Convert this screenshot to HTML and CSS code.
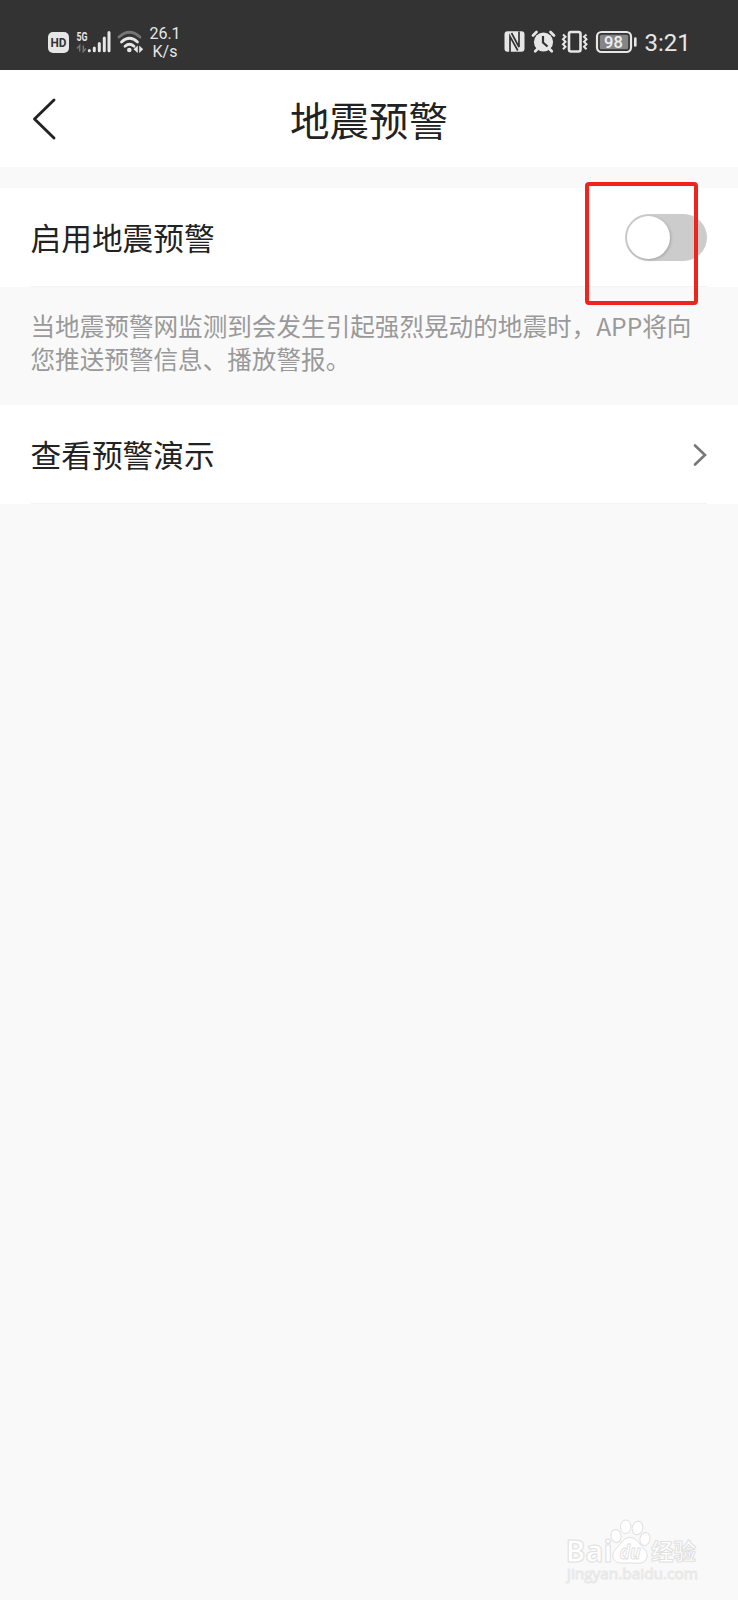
FILE: index.html
```html
<!DOCTYPE html>
<html lang="zh-CN">
<head>
<meta charset="utf-8">
<title>地震预警</title>
<link rel="stylesheet" href="styles.css">
</head>
<body>
<div class="screen">
  <div class="status">
    <svg class="status-left" viewBox="40 15 106 55" width="106" height="55">
      <rect x="48" y="32" width="21" height="21" rx="5" fill="#e6e6e6"/>
      <text class="hd" x="58.5" y="47.3" text-anchor="middle" textLength="16" lengthAdjust="spacingAndGlyphs">HD</text>
      <text class="gen" x="76.5" y="41" textLength="11" lengthAdjust="spacingAndGlyphs">5G</text>
      <g fill="none" stroke="#777" stroke-width="1.5"><path d="M79.7 51.500V45.500L77 48.500M83.300 45.500V51.500L86 48.500"/></g>
      <g stroke="#e6e6e6" stroke-width="3" stroke-linecap="round"><path d="M89.300 50.500v.2M94.300 48v2.800M99.300 43.500v7.300M104.300 38v12.800M109 32.500v18.300"/></g>
      <g fill="none" stroke-linecap="round" stroke-width="2.800">
        <path d="M119 37Q129.500 27.500 140 37" stroke="#757575"/>
        <path d="M121.500 42Q129.500 34.500 137.500 42M125 46.300Q129.500 42.300 134 46.300" stroke="#e6e6e6"/>
      </g>
      <circle cx="129.300" cy="50" r="2.300" fill="#e6e6e6"/>
      <path d="M137.800 45.500v7.500l-4.300-3.700zM139.200 45.500v7.500l4-3.700z" fill="#e6e6e6"/>
    </svg>
    <div class="speed"><span>26.1</span><span>K/s</span></div>
    <svg class="status-right" viewBox="490 15 150 55" width="150" height="55">
      <path d="M507.500 31.300h14q3 0 3 3v14.500q0 3-3 3h-14q-3 0-3-3V34.300q0-3 3-3z" fill="#e6e6e6"/>
      <path d="M510 52V36.500L517.800 50.500M519 31.500V47L511.500 33" fill="none" stroke="#333" stroke-width="1.700"/>
      <circle cx="543.500" cy="42" r="9.600" fill="#e6e6e6"/>
      <path d="M533 35.500l3.500-3.500M554 35.500l-3.500-3.500M537.500 49l-2.300 2.300M549.500 49l2.300 2.300" stroke="#e6e6e6" stroke-width="2.700" stroke-linecap="round"/>
      <path d="M543 36v6.500l4.500 4" fill="none" stroke="#333" stroke-width="2.200"/>
      <rect x="569" y="32" width="11.500" height="19.500" rx="2" fill="none" stroke="#e6e6e6" stroke-width="2.600"/>
      <path d="M563 34.500l2.500 2.300-2.500 2.500 2.500 2.500-2.500 2.500 2.500 2.500-2.500 2.500M586.500 34.500l-2.500 2.300 2.500 2.500-2.500 2.500 2.500 2.500-2.500 2.500 2.500 2.500" fill="none" stroke="#e6e6e6" stroke-width="2"/>
      <rect x="597" y="32" width="34" height="20" rx="4.500" fill="none" stroke="#e6e6e6" stroke-width="2.200"/>
      <rect x="599.800" y="34.800" width="28.400" height="14.400" rx="1.500" fill="#858585"/>
      <path d="M635.300 38.500v7" stroke="#e6e6e6" stroke-width="2.600" stroke-linecap="round"/>
      <text class="level" x="613.500" y="48" text-anchor="middle">98</text>
    </svg>
    <span class="clock">3:21</span>
  </div>

  <header class="header">
    <svg class="back" viewBox="0 0 26 44" width="26" height="44"><path d="M23 3L3.500 22L23 41" fill="none" stroke="#222" stroke-width="2.900" stroke-linecap="round" stroke-linejoin="round"/></svg>
    <h1 class="title">地震预警</h1>
  </header>

  <main>
    <section class="row">
      <span class="label">启用地震预警</span>
      <div class="switch"><div class="knob"></div></div>
      <div class="highlight"></div>
    </section>
    <p class="note">当地震预警网监测到会发生引起强烈晃动的地震时，APP将向<br>您推送预警信息、播放警报。</p>
    <section class="row row-link">
      <span class="label">查看预警演示</span>
      <svg class="chevron" viewBox="0 0 14 24" width="14" height="24"><path d="M2 2.500L12 12L2 21.500" fill="none" stroke="#777" stroke-width="2.600" stroke-linecap="round"/></svg>
    </section>
  </main>

  <svg class="watermark" viewBox="550 1500 188 100" width="188" height="100">
    <g fill="#fff" stroke="#e0e0e0" stroke-width="1">
      <text class="wm-brand" x="565.500" y="1561.500" textLength="47" lengthAdjust="spacingAndGlyphs">Bai</text>
      <ellipse cx="616" cy="1536" rx="5" ry="6.500" transform="rotate(-15 616 1536)"/>
      <ellipse cx="625.700" cy="1526.800" rx="5.200" ry="6.800"/>
      <ellipse cx="637.500" cy="1528" rx="5.200" ry="6.800" transform="rotate(12 637.500 1528)"/>
      <ellipse cx="645" cy="1539" rx="5" ry="6.500" transform="rotate(15 645 1539)"/>
      <path d="M630 1537.500c6 0 8 5 12 9s7 8 4 13-8 3.500-16 3.500-13 1-16-3.500 0-9 4-13 6-9 12-9z"/>
      <text class="wm-du" x="619.500" y="1559" textLength="21" lengthAdjust="spacingAndGlyphs">du</text>
      <text class="wm-cn" x="651" y="1560" textLength="45" lengthAdjust="spacingAndGlyphs">经验</text>
      <text class="wm-url" x="567" y="1579" textLength="131" lengthAdjust="spacingAndGlyphs">jingyan.baidu.com</text>
    </g>
  </svg>
</div>
</body>
</html>
```
FILE: styles.css
```css
* { box-sizing: border-box; }
body {
  margin: 0;
  background: #f9f9f9;
  font-family: "Noto Sans CJK SC", sans-serif;
  color: #222;
}
.screen {
  width: 738px;
  height: 1600px;
  display: flex;
  flex-direction: column;
  overflow: hidden;
}
.status {
  height: 70px;
  flex: none;
  background: #333;
  color: #e6e6e6;
  display: flex;
  align-items: flex-start;
  padding: 15px 0 0 40px;
  font-family: Roboto, sans-serif;
}
.status-left { flex: none; }
.speed {
  display: flex;
  flex-direction: column;
  align-items: center;
  width: 38px;
  padding-top: 9.500px;
  font-size: 16px;
  line-height: 18px;
}
.status-right { margin-left: 306px; flex: none; }
.clock { font-size: 24px; line-height: 28px; padding: 14px 0 0 4.500px; }
.hd { font: bold 13px Roboto, sans-serif; fill: #333; }
.gen { font: bold 13px Roboto, sans-serif; fill: #e6e6e6; }
.level { font: 500 16.500px Roboto, sans-serif; fill: #f0f0f0; }
.header {
  height: 97px;
  flex: none;
  background: #fff;
  display: grid;
  grid-template-columns: 60px 1fr 60px;
  align-items: center;
  padding: 0;
}
.back { margin-left: 30.500px; }
.title {
  margin: 0;
  padding-top: 1px;
  text-align: center;
  font-size: 39.500px;
  line-height: 56px;
  font-weight: 400;
}
main { padding-top: 21px; }
.row {
  position: relative;
  height: 99px;
  background: #fff;
  display: flex;
  align-items: center;
  justify-content: space-between;
  padding: 0 31px 0 30.500px;
}
.row::after {
  content: "";
  position: absolute;
  left: 31px;
  right: 31px;
  bottom: 0;
  height: 1px;
  background: #f3f3f3;
}
.label { font-size: 30.700px; line-height: 44px; padding-bottom: 1px; }
.switch {
  width: 82px;
  height: 47px;
  border-radius: 24px;
  background: #ccc;
  padding: 2px;
}
.knob {
  width: 43px;
  height: 43px;
  border-radius: 50%;
  background: #fff;
  box-shadow: 1px 1px 3px rgba(0, 0, 0, .2);
}
.highlight {
  position: absolute;
  left: 584.500px;
  top: -6px;
  width: 113px;
  height: 123px;
  border: 4px solid #ee241d;
  border-radius: 4px;
  z-index: 2;
}
.note {
  margin: 0;
  height: 118px;
  padding: 22px 0 0 30.500px;
  font-size: 24.600px;
  line-height: 33px;
  color: #999;
  white-space: nowrap;
}
.watermark { margin: auto 0 0 550px; flex: none; }
.wm-brand { font: bold 30px "Open Sans", sans-serif; }
.wm-du { font: italic bold 20px "Open Sans", sans-serif; }
.wm-cn { font: bold 23px "Noto Sans CJK SC", sans-serif; }
.wm-url { font: 15px "Open Sans", sans-serif; stroke: #e8e8e8; }
```
